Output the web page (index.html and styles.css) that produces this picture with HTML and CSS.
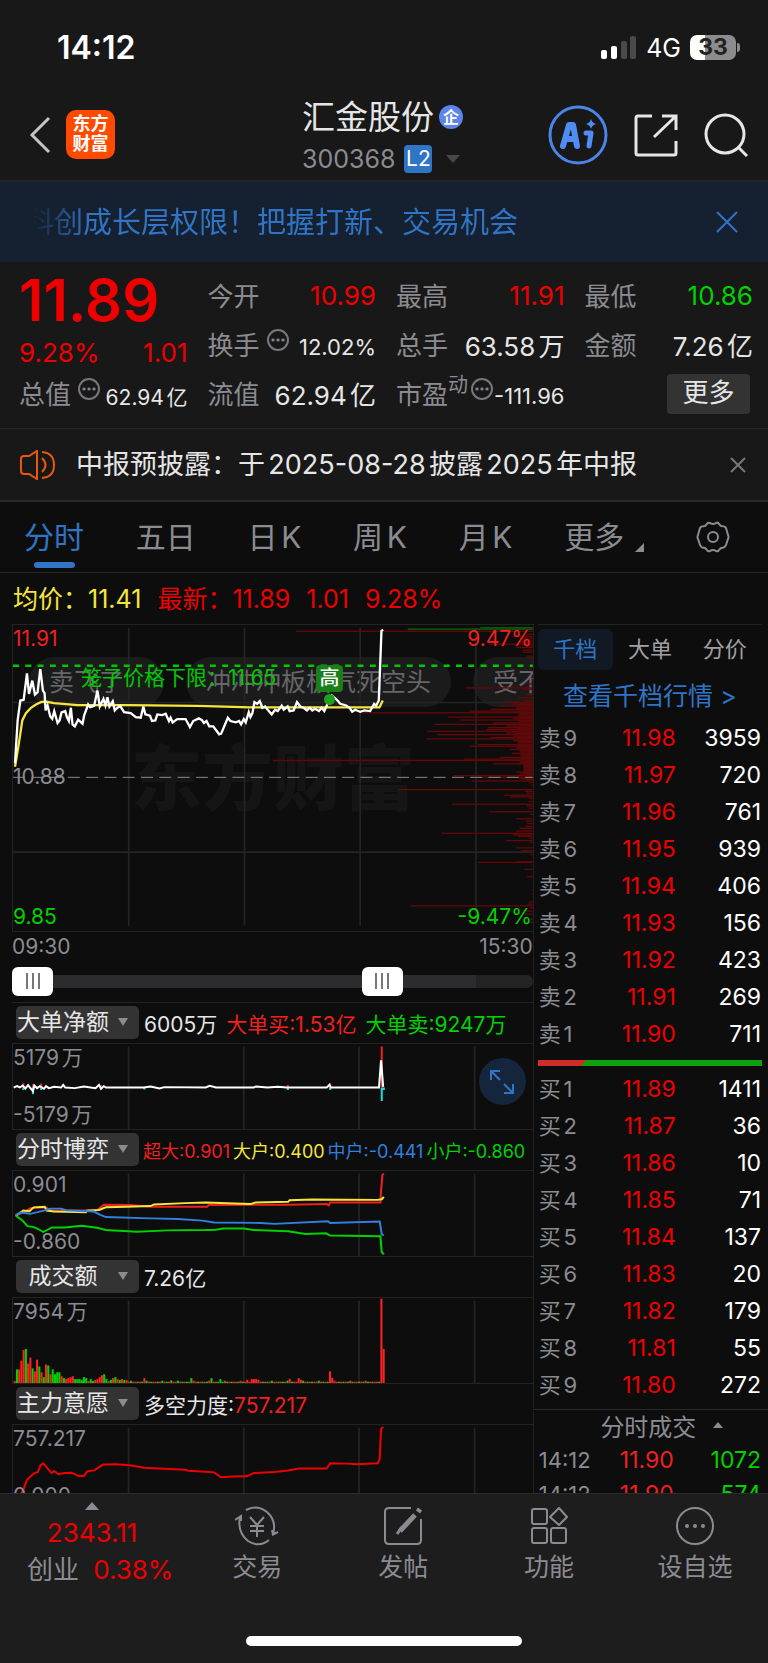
FILE: index.html
```html
<!DOCTYPE html>
<html lang="zh-CN">
<head>
<meta charset="UTF-8">
<meta name="viewport" content="width=device-width, initial-scale=1.0">
<title>汇金股份 300368</title>
<link rel="stylesheet" href="styles.css">
</head>
<body>
<div class="status-bar">
    <span class="time">14:12</span>
    <div class="status-right">
        <svg class="signal" width="36" height="23" viewBox="0 0 36 23">
            <rect x="0" y="14" width="6" height="9" rx="2" fill="#fff"/>
            <rect x="10" y="10" width="6" height="13" rx="2" fill="#fff"/>
            <rect x="20" y="5" width="6" height="18" rx="2" fill="#4a4a4a"/>
            <rect x="29" y="0" width="6" height="23" rx="2" fill="#4a4a4a"/>
        </svg>
        <span class="network">4G</span>
        <span class="battery">33</span>
    </div>
</div>

<header class="top-bar">
    <div class="top-side">
        <button class="icon-btn" aria-label="返回">
            <svg width="22" height="38" viewBox="0 0 22 38" fill="none" stroke="#c4c4c4" stroke-width="3"><path d="M20 2 L3 19 L20 36"/></svg>
        </button>
        <a class="logo" href="#">东方<br>财富</a>
    </div>
    <div class="stock-title">
        <h1>汇金股份<span class="corp-badge">企</span></h1>
        <div class="stock-code">300368<span class="level-badge">L2</span><span class="tri-down"></span></div>
    </div>
    <div class="top-side top-right">
        <button class="icon-btn" aria-label="AI">
            <svg width="60" height="60" viewBox="0 0 60 60" fill="none">
                <circle cx="30" cy="30" r="28" stroke="#4a86e8" stroke-width="3"/>
                <path d="M15 41 L21 20 H25 L29 41 M18 34 H27" stroke="#4f8df5" stroke-width="6" stroke-linecap="round" stroke-linejoin="round"/>
                <path d="M38 28 H43 L41 41" stroke="#4f8df5" stroke-width="5" stroke-linecap="round" stroke-linejoin="round"/>
                <path d="M43 14 Q44 18 48 19 Q44 20 43 24 Q42 20 38 19 Q42 18 43 14Z" fill="#4f8df5"/>
            </svg>
        </button>
        <button class="icon-btn" aria-label="分享">
            <svg width="44" height="44" viewBox="0 0 44 44" fill="none" stroke="#e6e6e6" stroke-width="3"><path d="M18 3 H4 Q2 3 2 5 V40 Q2 42 4 42 H40 Q42 42 42 40 V28"/><path d="M28 3 H42 V17 M42 3 L20 24"/></svg>
        </button>
        <button class="icon-btn" aria-label="搜索">
            <svg width="44" height="44" viewBox="0 0 44 44" fill="none" stroke="#e6e6e6" stroke-width="3"><circle cx="21" cy="21" r="19"/><path d="M34 34 L43 43"/></svg>
        </button>
    </div>
</header>

<div class="banner">
    <div class="banner-text"><span>科创成长层权限！把握打新、交易机会</span></div>
    <button class="icon-btn" aria-label="关闭">
        <svg width="22" height="22" viewBox="0 0 22 22" stroke="#3074c6" stroke-width="2"><path d="M1 1 L21 21 M21 1 L1 21"/></svg>
    </button>
</div>

<section class="quote">
    <div class="quote-col">
        <div class="last-price">11.89</div>
        <div class="change"><span>9.28%</span><span>1.01</span></div>
        <div class="item"><span class="label">总值</span><span class="dots"></span><span class="value small">62.94亿</span></div>
    </div>
    <div class="quote-col">
        <div class="item"><span class="label">今开</span><span class="value red">10.99</span></div>
        <div class="item"><span class="label">换手</span><span class="dots"></span><span class="value small">12.02%</span></div>
        <div class="item"><span class="label">流值</span><span class="value">62.94亿</span></div>
    </div>
    <div class="quote-col">
        <div class="item"><span class="label">最高</span><span class="value red">11.91</span></div>
        <div class="item"><span class="label">总手</span><span class="value">63.58万</span></div>
        <div class="item"><span class="label">市盈<sup>动</sup></span><span class="dots"></span><span class="value small">-111.96</span></div>
    </div>
    <div class="quote-col">
        <div class="item"><span class="label">最低</span><span class="value green">10.86</span></div>
        <div class="item"><span class="label">金额</span><span class="value">7.26亿</span></div>
        <div class="item"><button class="more-btn">更多</button></div>
    </div>
</section>

<div class="notice">
    <svg width="36" height="30" viewBox="0 0 36 30" fill="none" stroke="#e8590c" stroke-width="2"><path d="M9 6 H4 Q1 6 1 9 V21 Q1 24 4 24 H9 L17 29 V1 Z"/><path d="M22 8 Q29 15 22 22"/><path d="M22 2 Q34 3 34 15 Q34 27 22 28"/></svg>
    <p>中报预披露：于2025-08-28披露2025年中报</p>
    <button class="icon-btn" aria-label="关闭">
        <svg width="16" height="16" viewBox="0 0 16 16" stroke="#77777c" stroke-width="2"><path d="M1 1 L15 15 M15 1 L1 15"/></svg>
    </button>
</div>

<nav class="period-tabs">
    <button class="active">分时</button>
    <button>五日</button>
    <button>日K</button>
    <button>周K</button>
    <button>月K</button>
    <button class="has-more">更多</button>
    <button aria-label="设置">
        <svg width="34" height="32" viewBox="0 0 34 32" fill="none" stroke="#8b8b92" stroke-width="2"><path d="M11 3 Q12 1 14 2 Q17 4 20 2 Q22 1 23 3 L25 5 Q29 5 30 7 L32 14 Q33 16 32 18 L30 24 Q29 27 25 27 L23 29 Q22 31 20 30 Q17 28 14 30 Q12 31 11 29 L9 27 Q5 27 4 24 L2 18 Q1 16 2 14 L4 7 Q5 5 9 5 Z"/><circle cx="17" cy="16" r="5"/></svg>
    </button>
</nav>

<div class="legend">
    <span class="yellow">均价：11.41</span>
    <span>最新：11.89</span>
    <span>1.01</span>
    <span>9.28%</span>
</div>

<main class="content">
    <section class="charts">
        <div class="price-chart">
            <div class="watermark">东方财富</div>
            <div class="barrage">
                <span>卖飞了</span>
                <span>冲冲冲板板气死空头</span>
                <span>受不了</span>
            </div>
            <svg viewBox="0 0 1563 924" preserveAspectRatio="none">
                <path class="grid" d="M348 8V908M696 8V908M1044 8V908M1392 8V908M0 234H1563M0 686H1563"/>
                <g id="profile"></g>
                <path class="dash" d="M0 460H1563"/>
                <path class="limit" d="M0 123H1563"/>
                <polyline class="avg" transform="translate(-6 -12)" points="12,440 22,380 34,300 45,278 60,262 75,252 90,245 103,243 130,248 200,254 350,254 560,256 720,261 1108,261 1118,240"/>
                <polyline class="price" transform="translate(-6 -12)" points="12,430 20,300 28,240 38,238 48,158 54,220 64,180 72,222 80,215 88,145 96,210 101,218 104,270 110,255 118,288 124,295 130,272 140,308 146,300 152,276 163,272 168,290 174,302 180,262 185,312 192,318 202,298 215,310 220,285 232,252 238,260 250,256 260,210 267,258 278,235 284,255 290,230 296,258 306,242 312,270 320,262 328,256 340,275 360,278 375,290 390,292 398,258 404,282 418,286 424,302 434,300 440,282 455,284 465,280 475,302 480,292 486,306 500,296 525,296 538,320 548,302 565,294 575,300 580,308 588,302 596,318 608,318 626,342 632,340 652,292 660,302 676,306 686,302 692,312 700,296 706,306 715,275 720,290 726,278 732,245 740,250 748,242 756,262 764,258 774,270 784,282 794,268 802,272 814,256 820,268 832,258 838,272 850,270 860,245 870,258 880,262 890,270 898,262 906,270 914,265 926,272 934,262 942,272 952,250 965,225 980,238 990,250 1008,255 1018,262 1026,274 1035,268 1050,274 1062,270 1080,272 1092,250 1098,256 1106,240 1114,30 1119,26"/>
            </svg>
            <span class="limit-text">笼子价格下限：11.65</span>
            <span class="high-tag">高</span>
            <span class="axis top red">11.91</span>
            <span class="axis top right red">9.47%</span>
            <span class="axis middle">10.88</span>
            <span class="axis bottom green">9.85</span>
            <span class="axis bottom right green">-9.47%</span>
        </div>
        <div class="time-axis"><span>09:30</span><span>15:30</span></div>
        <div class="range">
            <input type="range" min="0" max="240" value="0" aria-label="开始时间">
            <input type="range" min="0" max="240" value="175" aria-label="结束时间">
        </div>

        <div class="indicator-head">
            <select aria-label="指标一"><option>大单净额</option></select>
            <span>6005万</span>
            <span class="red">大单买:1.53亿</span>
            <span class="green">大单卖:9247万</span>
        </div>
        <div class="indicator">
            <svg viewBox="0 0 1511 262" preserveAspectRatio="none">
                <path class="grid" d="M336 8V262M671 8V262M1006 8V262M1342 8V262"/>
                <path class="line red" d="M30 121V134M58 124V134M82 122V134M255 126V134M799 126V134M922 120V134M1072 8V134"/>
                <path class="line cyan" d="M30 134V142M58 134V155M82 134V142M382 134V140M799 134V142M922 134V142M1072 134V176M1078 134V142"/>
                <polyline class="line white" points="2,134 12,130 20,134 28,128 36,137 44,127 50,135 58,145 62,128 70,136 78,130 90,138 96,130 104,136 120,132 140,134 146,126 152,134 180,136 206,131 240,136 250,126 256,138 264,130 270,134 380,134 400,131 426,137 440,133 560,134 572,129 590,134 700,134 706,131 740,134 770,132 796,134 912,134 920,126 924,134 1064,134 1070,50 1076,132"/>
            </svg>
            <span class="axis top">5179万</span>
            <span class="axis bottom">-5179万</span>
            <button class="expand" aria-label="全屏">
                <svg width="24" height="24" viewBox="0 0 24 24" fill="none" stroke="#3074c6" stroke-width="2"><path d="M1 10V1H10M1 1L10 10M23 14V23H14M23 23L14 14"/></svg>
            </button>
        </div>

        <div class="indicator-head compact">
            <select aria-label="指标二"><option>分时博弈</option></select>
            <span class="red">超大:0.901</span>
            <span class="yellow">大户:0.400</span>
            <span class="blue">中户:-0.441</span>
            <span class="green">小户:-0.860</span>
        </div>
        <div class="indicator">
            <svg viewBox="0 0 1511 262" preserveAspectRatio="none">
                <path class="grid" d="M336 8V262M671 8V262M1006 8V262M1342 8V262"/>
                <polyline class="line red" points="8,137 35,125 50,115 95,112 110,122 205,122 245,120 264,104 340,105 400,110 564,110 570,105 800,104 912,102 918,106 922,97 1068,97 1070,60 1074,12 1078,8"/>
                <polyline class="line yellow" points="8,138 30,122 48,124 60,112 92,110 98,122 118,125 212,127 215,122 250,120 270,112 330,110 400,108 410,103 500,99 560,97 690,102 705,97 800,95 804,90 870,88 1060,89 1072,87 1078,80"/>
                <polyline class="line blue" points="8,135 25,128 50,132 90,122 108,116 140,116 155,121 235,125 254,135 270,142 400,146 480,148 550,153 585,159 720,160 760,163 915,155 922,160 1066,156 1072,195 1078,199"/>
                <polyline class="line green" points="8,138 25,150 42,170 60,173 72,178 88,188 114,174 150,174 200,169 244,175 270,182 360,187 450,183 560,182 590,181 610,177 670,177 700,182 800,186 850,194 910,192 922,199 1068,201 1072,250 1078,257"/>
            </svg>
            <span class="axis top">0.901</span>
            <span class="axis bottom">-0.860</span>
        </div>

        <div class="indicator-head">
            <select aria-label="指标三"><option>成交额</option></select>
            <span>7.26亿</span>
        </div>
        <div class="indicator">
            <svg viewBox="0 0 1511 262" preserveAspectRatio="none">
                <path class="grid" d="M336 8V262M671 8V262M1006 8V262M1342 8V262"/>
                <g id="amount"></g>
            </svg>
            <span class="axis top">7954万</span>
        </div>

        <div class="indicator-head">
            <select aria-label="指标四"><option>主力意愿</option></select>
            <span>多空力度:<b class="red">757.217</b></span>
        </div>
        <div class="indicator">
            <svg viewBox="0 0 1511 262" preserveAspectRatio="none">
                <path class="grid" d="M336 8V262M671 8V262M1006 8V262M1342 8V262"/>
                <polyline class="line deep-red" points="8,250 22,215 30,200 40,170 60,150 72,145 80,124 88,118 96,128 112,148 120,142 132,152 150,148 170,147 190,157 206,157 216,143 236,140 262,122 300,121 340,124 380,132 500,138 510,141 560,144 585,146 604,161 640,159 680,158 700,148 760,145 800,140 830,134 912,134 922,118 970,119 1000,121 1060,118 1066,105 1070,12 1076,6"/>
            </svg>
            <span class="axis top">757.217</span>
            <span class="axis bottom">0.000</span>
        </div>
    </section>

    <aside class="order-book">
        <div class="book-tabs">
            <button class="active">千档</button>
            <button>大单</button>
            <button>分价</button>
        </div>
        <a class="book-link" href="#">查看千档行情 &gt;</a>
        <table>
            <tr><th>卖9</th><td>11.98</td><td>3959</td></tr>
            <tr><th>卖8</th><td>11.97</td><td>720</td></tr>
            <tr><th>卖7</th><td>11.96</td><td>761</td></tr>
            <tr><th>卖6</th><td>11.95</td><td>939</td></tr>
            <tr><th>卖5</th><td>11.94</td><td>406</td></tr>
            <tr><th>卖4</th><td>11.93</td><td>156</td></tr>
            <tr><th>卖3</th><td>11.92</td><td>423</td></tr>
            <tr><th>卖2</th><td>11.91</td><td>269</td></tr>
            <tr><th>卖1</th><td>11.90</td><td>711</td></tr>
        </table>
        <div class="ratio"></div>
        <table>
            <tr><th>买1</th><td>11.89</td><td>1411</td></tr>
            <tr><th>买2</th><td>11.87</td><td>36</td></tr>
            <tr><th>买3</th><td>11.86</td><td>10</td></tr>
            <tr><th>买4</th><td>11.85</td><td>71</td></tr>
            <tr><th>买5</th><td>11.84</td><td>137</td></tr>
            <tr><th>买6</th><td>11.83</td><td>20</td></tr>
            <tr><th>买7</th><td>11.82</td><td>179</td></tr>
            <tr><th>买8</th><td>11.81</td><td>55</td></tr>
            <tr><th>买9</th><td>11.80</td><td>272</td></tr>
        </table>
        <h2 class="deals-title">分时成交<span class="tri-up"></span></h2>
        <table class="deals">
            <tr><th>14:12</th><td>11.90</td><td>1072</td></tr>
            <tr><th>14:12</th><td>11.90</td><td>574</td></tr>
        </table>
    </aside>
</main>

<footer class="bottom-bar">
    <nav class="bottom-nav">
        <a class="index" href="#">
            <span class="tri-up"></span>
            <span class="index-value">2343.11</span>
            <span class="index-name">创业<b>0.38%</b></span>
        </a>
        <a href="#">
            <svg width="44" height="40" viewBox="0 0 44 40" fill="none" stroke="#8b8b92" stroke-width="2"><path d="M11 4 Q22 -2 32 6 Q42 15 38 28 M38 29 L37 24 M37 29 L43 26"/><path d="M34 34 Q24 42 13 35 Q2 26 5 11 M0 14 L6 10 L6 15"/><path d="M15 11 L22 19 L29 11 M22 19 V31 M15 20 H29 M15 25 H29"/></svg>
            <span>交易</span>
        </a>
        <a href="#">
            <svg width="40" height="40" viewBox="0 0 40 40" fill="none" stroke="#8b8b92" stroke-width="2"><path d="M28 2 H6 Q2 2 2 6 V34 Q2 38 6 38 H34 Q38 38 38 34 V13"/><path d="M32 9 L17 25 M35 6 L37 3" stroke-width="5"/><path d="M19 21 L14 28" stroke-width="3"/></svg>
            <span>发帖</span>
        </a>
        <a href="#">
            <svg width="40" height="40" viewBox="0 0 40 40" fill="none" stroke="#8b8b92" stroke-width="2"><rect x="3" y="3" width="15" height="15" rx="2"/><rect x="3" y="22" width="15" height="15" rx="2"/><rect x="22" y="22" width="15" height="15" rx="2"/><path d="M30 2 L38 11 L30 19 L21 11 Z" stroke-linejoin="round"/></svg>
            <span>功能</span>
        </a>
        <a href="#">
            <svg width="40" height="40" viewBox="0 0 40 40" fill="none" stroke="#8b8b92" stroke-width="2"><circle cx="20" cy="20" r="18"/><g fill="#8b8b92" stroke="none"><circle cx="12" cy="20" r="2"/><circle cx="20" cy="20" r="2"/><circle cx="28" cy="20" r="2"/></g></svg>
            <span>设自选</span>
        </a>
    </nav>
    <div class="home-indicator"></div>
</footer>

<script>
    const NS = "http://www.w3.org/2000/svg";

    function bar(parent, x, y, width, height, color) {
        const rect = document.createElementNS(NS, "rect");
        rect.setAttribute("x", x);
        rect.setAttribute("y", y);
        rect.setAttribute("width", width);
        rect.setAttribute("height", height);
        rect.setAttribute("fill", color);
        parent.appendChild(rect);
    }

    // Volume by price: [y, length]
    const profile = [
        [19, 711], [28, 20], [34, 60], [40, 40], [46, 30], [52, 45], [58, 130], [64, 20], [68, 50], [76, 30], [82, 30],
        [94, 18], [100, 8], [112, 6], [138, 6], [158, 5], [178, 20], [190, 203], [194, 30], [210, 20], [220, 45],
        [228, 25], [234, 80], [238, 60], [244, 95], [250, 50], [255, 125], [260, 190], [265, 509], [270, 40],
        [278, 255], [282, 60], [287, 220], [291, 40], [296, 120], [300, 295], [305, 80], [310, 135], [316, 140],
        [321, 317], [326, 80], [331, 288], [336, 60], [340, 128], [344, 320], [349, 60], [354, 40], [361, 165],
        [366, 192], [370, 50], [376, 70], [381, 40], [388, 62], [394, 30], [400, 100], [405, 207], [409, 781],
        [414, 40], [419, 120], [424, 25], [430, 20], [436, 15], [444, 50], [450, 40], [455, 240], [460, 150],
        [464, 40], [471, 183], [476, 10], [484, 5], [497, 405], [502, 24], [508, 18], [514, 86], [519, 68],
        [524, 10], [533, 12], [541, 244], [546, 18], [553, 12], [564, 129], [572, 8], [585, 50], [592, 20],
        [600, 18], [608, 22], [614, 40], [622, 50], [629, 273], [634, 60], [638, 45], [644, 10], [651, 80],
        [656, 8], [673, 50], [682, 35], [693, 6], [715, 50], [717, 164], [738, 25], [760, 17], [800, 4], [813, 3],
        [836, 12], [843, 16], [848, 367], [854, 10], [864, 20], [873, 25], [888, 10], [898, 15]
    ];
    const profileGroup = document.getElementById("profile");
    bar(profileGroup, 1563 - 376, 10, 376, 5, "#0a560a");
    bar(profileGroup, 1563 - 158, 6, 158, 5, "#0a560a");
    profile.forEach(([y, length]) => bar(profileGroup, 1563 - length, y - 2, length, 4, "#650808"));
    for (let y = 238; y < 470; y += 4) {
        const length = y < 320 ? 38 + (y * 7) % 12 : 52 - (y - 320) / 4 + (y * 7) % 9;
        bar(profileGroup, 1563 - length, y, length, 4, "#5c0a0a");
    }

    // Turnover per minute: height and colour
    const amount = ("6r 42g 42r 69r 102r 105g 60r 78r 45g 36r 72r 51g 33r 18g 57r 54g 27r 42g 27g 33g 33g 21r 15g 12r 15r " +
        "18r 21r 12g 12g 12g 9g 18g 15g 6r 12g 6g 9r 12r 18r 24r 27g 12g 6r 10g 15r 18g 12r 9g 12r 9g 9r").split(" ");
    for (let i = amount.length; i < 165; i++) {
        amount.push((i % 7 === 3 ? 7 : 4) + ((i * 5) % 9 < 5 ? "r" : "g"));
    }
    Object.assign(amount, {58: "15r", 70: "8g", 79: "15g", 88: "15g", 92: "12g", 104: "10r", 106: "12r", 107: "12r",
        108: "12r", 109: "10r", 123: "13r", 127: "15r", 128: "10r", 141: "36r", 142: "16r", 164: "260r", 165: "105r"});
    amount.forEach((item, i) => {
        const height = parseInt(item);
        bar(document.getElementById("amount"), 2 + i * 6.5, 262 - height, 6, height, item.endsWith("r") ? "#ff2222" : "#00d200");
    });
</script>
</body>
</html>
```

FILE: styles.css
```css
* {
    box-sizing: border-box;
}

body {
    display: flex;
    flex-direction: column;
    height: 100vh;
    margin: 0;
    overflow: hidden;
    background-color: #181818;
    color: #e6e6e6;
    font-family: Inter, "Noto Sans CJK SC", sans-serif;
    font-size: 26px;
    text-autospace: normal;
}

button, select {
    padding: 0;
    border: none;
    background: none;
    color: inherit;
    font: inherit;
    cursor: pointer;
}

a {
    color: inherit;
    text-decoration: none;
}

h1, h2, p {
    margin: 0;
    font-weight: normal;
}

svg {
    display: block;
}

.red { color: #f02020; }
.green { color: #00d200; }
.yellow { color: #f5e63c; }
.blue { color: #3080e0; }

.tri-down, .tri-up {
    border-left: 7px solid transparent;
    border-right: 7px solid transparent;
}

.tri-down {
    border-top: 8px solid #48484a;
}

.tri-up {
    border-bottom: 8px solid #8b8b92;
}

/* status bar */
.status-bar {
    display: flex;
    flex-shrink: 0;
    align-items: center;
    justify-content: space-between;
    height: 95px;
    padding: 0 32px 0 57px;
    color: #fff;
}

.time {
    font-size: 32px;
    font-weight: 600;
}

.status-right {
    display: flex;
    align-items: center;
    gap: 9px;
}

.network {
    font-size: 25px;
}

.battery {
    position: relative;
    width: 46px;
    height: 25px;
    border-radius: 7px;
    background: linear-gradient(to right, #fff 33%, #8c8c8c 33%);
    color: #222;
    font-size: 23px;
    font-weight: 700;
    line-height: 25px;
    text-align: center;
}

.battery::after {
    content: "";
    position: absolute;
    top: 8px;
    right: -4px;
    width: 3px;
    height: 9px;
    border-radius: 0 3px 3px 0;
    background-color: #8c8c8c;
}

/* header */
.top-bar {
    display: flex;
    flex-shrink: 0;
    align-items: center;
    justify-content: space-between;
    height: 87px;
    padding: 0 20px 6px 29px;
    border-bottom: 2px solid #252525;
}

.top-side {
    display: flex;
    flex: 1;
    align-items: center;
    gap: 15px;
}

.top-right {
    justify-content: flex-end;
    gap: 26px;
}

.logo {
    width: 49px;
    height: 49px;
    padding-top: 4px;
    border-radius: 10px;
    background-color: #ff4a00;
    color: #fff;
    font-size: 18px;
    font-weight: 700;
    line-height: 20px;
    text-align: center;
}

.stock-title {
    padding: 6px 12px 0 0;
}

.stock-title h1 {
    display: flex;
    align-items: center;
    gap: 5px;
    font-size: 33px;
    line-height: 42px;
}

.corp-badge {
    width: 24px;
    height: 24px;
    border-radius: 50%;
    background-color: #5b85ea;
    color: #fff;
    font-size: 16px;
    font-weight: 700;
    line-height: 24px;
    text-align: center;
}

.stock-code {
    display: flex;
    align-items: center;
    color: #8b8b92;
    font-size: 25px;
    line-height: 42px;
}

.level-badge {
    width: 28px;
    height: 28px;
    margin: 0 14px 0 9px;
    border-radius: 4px;
    background-color: #3074c6;
    color: #fff;
    font-size: 21px;
    line-height: 28px;
    text-align: center;
}

/* banner */
.banner {
    display: flex;
    flex-shrink: 0;
    align-items: center;
    justify-content: space-between;
    height: 80px;
    padding: 0 30px 0 32px;
    background-color: #152130;
    color: #3074c6;
    font-size: 29px;
}

.banner-text {
    display: flex;
    justify-content: flex-end;
    width: 486px;
    padding-bottom: 4px;
    overflow: hidden;
    white-space: nowrap;
    mask-image: linear-gradient(to right, transparent, #000 56px);
}

/* quote */
.quote {
    display: grid;
    grid-template-columns: repeat(4, 1fr);
    flex-shrink: 0;
    gap: 20px;
    height: 167px;
    padding: 9px 15px 0 19px;
    border-bottom: 1px solid #282828;
}

.quote-col {
    display: flex;
    flex-direction: column;
}

.item {
    display: flex;
    align-items: center;
    height: 49px;
}

.label {
    position: relative;
    padding-bottom: 3px;
    color: #8b8b92;
}

.label sup {
    position: absolute;
    top: -1px;
    left: 100%;
    font-size: 20px;
    line-height: 24px;
}

.label:has(sup) {
    margin-right: 16px;
}

.value {
    margin-left: auto;
}

.value.red {
    color: #ee0000;
}

.value.small {
    padding-top: 4px;
    font-size: 22px;
}

.quote-col:first-child .small {
    font-size: 21px;
}

.dots {
    width: 22px;
    height: 22px;
    margin: 0 0 10px 7px;
    padding: 0 1px;
    border: 2px solid #77777c;
    border-radius: 50%;
    background: radial-gradient(circle, #8b8b92 1px, transparent 2px) center / 5px 18px;
    background-clip: content-box;
}

.last-price {
    height: 60px;
    color: #ee0000;
    font-size: 58px;
    font-weight: 600;
    line-height: 58px;
}

.change {
    display: flex;
    justify-content: space-between;
    height: 38px;
    color: #ee0000;
    line-height: 44px;
}

.more-btn {
    width: 83px;
    height: 40px;
    margin: 0 3px 0 auto;
    padding-bottom: 2px;
    border-radius: 4px;
    background-color: #333;
    line-height: 38px;
}

/* notice */
.notice {
    display: flex;
    flex-shrink: 0;
    align-items: center;
    height: 73px;
    padding: 0 22px 0 20px;
    border-bottom: 2px solid #282828;
}

.notice p {
    flex: 1;
    margin-left: 20px;
    padding-bottom: 4px;
    font-size: 27px;
}

/* tabs */
.period-tabs {
    display: flex;
    flex-shrink: 0;
    align-items: center;
    justify-content: space-between;
    height: 71px;
    padding: 0 38px 0 24px;
    border-bottom: 1px solid #282828;
    background-color: #0d0d0d;
    color: #8b8b92;
    font-size: 30px;
}

.period-tabs button {
    position: relative;
    line-height: 70px;
}

.period-tabs .active {
    color: #3074c6;
}

.period-tabs .active::after {
    content: "";
    position: absolute;
    bottom: 4px;
    left: 10px;
    width: 41px;
    height: 6px;
    border-radius: 3px;
    background-color: #3074c6;
}

.period-tabs .has-more {
    padding-right: 20px;
}

.has-more::after {
    content: "";
    position: absolute;
    right: 0;
    bottom: 20px;
    border-bottom: 9px solid #8b8b92;
    border-left: 9px solid transparent;
}

.legend {
    display: flex;
    flex-shrink: 0;
    gap: 16px;
    height: 51px;
    padding-left: 13px;
    background-color: #0d0d0d;
    color: #ee0000;
    font-size: 25px;
    line-height: 52px;
}

/* charts */
.content {
    display: flex;
    flex: 1;
    min-height: 0;
    overflow: hidden;
    background-color: #0d0d0d;
}

.charts {
    flex: 1;
    min-width: 0;
    padding-left: 12px;
    border-right: 1px solid #222;
}

.charts svg {
    fill: none;
}

.price-chart, .indicator {
    position: relative;
    overflow: hidden;
    border: solid #232323;
    border-width: 1px 0 1px 1px;
}

.price-chart {
    height: 308px;
}

.price-chart > svg, .indicator > svg {
    position: relative;
    width: 100%;
    height: 100%;
}

.grid {
    stroke: #242424;
    stroke-width: 5;
}

.dash {
    stroke: #8b8b92;
    stroke-width: 3;
    stroke-dasharray: 36 19;
}

.limit {
    stroke: #00c800;
    stroke-width: 7;
    stroke-dasharray: 18 19;
}

.avg, .price {
    stroke: #f5e63c;
    stroke-width: 7;
}

.price {
    stroke: #fff;
}

.line {
    stroke: currentColor;
    stroke-width: 6;
}

.white { color: #fff; }
.cyan { color: #20d8d8; }
.deep-red { color: #ee0000; }

.watermark {
    position: absolute;
    top: 108px;
    left: 118px;
    color: #151515;
    font-size: 71px;
    font-weight: 900;
    line-height: 90px;
}

.barrage {
    position: absolute;
    top: 32px;
    left: 16px;
    display: flex;
    gap: 22px;
    color: #66666a;
    font-size: 25px;
    line-height: 50px;
    white-space: nowrap;
}

.barrage span {
    padding: 0 20px;
    border-radius: 25px;
    background-color: rgba(50, 50, 50, 0.4);
}

.barrage span:first-child {
    padding-right: 40px;
}

.limit-text {
    position: absolute;
    top: 38px;
    left: 68px;
    color: #00c800;
    font-size: 21px;
    line-height: 30px;
}

.high-tag {
    position: absolute;
    top: 40px;
    left: 303px;
    width: 27px;
    border-radius: 4px;
    background-color: #1a7f1a;
    color: #fff;
    font-size: 20px;
    font-weight: 500;
    line-height: 27px;
    text-align: center;
}

.high-tag::after {
    content: "";
    position: absolute;
    top: 29px;
    left: 8px;
    width: 11px;
    height: 11px;
    border-radius: 50%;
    background-color: #1fa01f;
}

.axis {
    position: absolute;
    left: 0;
    color: #8b8b92;
    font-size: 21px;
    line-height: 26px;
}

.axis.red { color: #f02020; }
.axis.green { color: #00d200; }
.axis.top { top: 1px; }
.axis.bottom { bottom: 1px; }
.axis.middle { top: 139px; }

.axis.right {
    right: 1px;
    left: auto;
}

.time-axis {
    display: flex;
    justify-content: space-between;
    color: #8b8b92;
    font-size: 21px;
    line-height: 30px;
}

.range {
    position: relative;
    height: 41px;
    border-bottom: 1px solid #222;
}

.range::before {
    content: "";
    position: absolute;
    top: 13px;
    width: 100%;
    height: 13px;
    border-radius: 7px;
    background: linear-gradient(to right, #2c2c2e 89%, #232323 89%);
}

.range input {
    position: absolute;
    top: 4px;
    left: 0;
    width: 100%;
    height: 30px;
    margin: 0;
    background: none;
    appearance: none;
    pointer-events: none;
}

.range input::-webkit-slider-thumb {
    width: 41px;
    height: 29px;
    border-radius: 6px;
    background: repeating-linear-gradient(to right, #777 0 2px, #fff 2px 6px) center / 14px 16px no-repeat #fff;
    appearance: none;
    pointer-events: auto;
}

.indicator-head {
    position: relative;
    display: flex;
    align-items: center;
    gap: 9px;
    height: 40px;
    padding: 0 0 1px 4px;
    font-size: 21px;
    text-autospace: no-autospace;
    white-space: nowrap;
}

.indicator-head.compact {
    gap: 3px;
    font-size: 18px;
}

.indicator-head select {
    width: 123px;
    height: 33px;
    margin-right: -4px;
    padding: 0 29px 0 0;
    border-radius: 5px;
    background-color: #333;
    font-size: 23px;
    line-height: 33px;
    text-align-last: center;
    appearance: none;
}

.indicator-head.compact select {
    margin-right: 1px;
}

.indicator-head b {
    font-weight: normal;
}

/* arrow of the drop-down */
.indicator-head::after {
    content: "";
    position: absolute;
    top: 15px;
    left: 106px;
    border-top: 8px solid #8b8b92;
    border-right: 5px solid transparent;
    border-left: 5px solid transparent;
    pointer-events: none;
}

.indicator {
    height: 87px;
}

.expand {
    position: absolute;
    top: 14px;
    right: 7px;
    display: flex;
    align-items: center;
    justify-content: center;
    width: 47px;
    height: 47px;
    border-radius: 50%;
    background-color: #15263c;
}

/* order book */
.order-book {
    flex: 0 0 30.5%;
    padding: 0 6px 0 4px;
}

.book-tabs {
    display: flex;
    padding-top: 4px;
    border-top: 1px solid #232323;
    color: #a0a0a4;
    font-size: 22px;
}

.book-tabs button {
    flex: 1;
    height: 41px;
    padding-bottom: 5px;
    border-radius: 6px;
}

.book-tabs .active {
    background-color: #111a24;
    color: #3074c6;
}

.book-link {
    display: block;
    height: 50px;
    color: #3074c6;
    font-size: 25px;
    line-height: 53px;
    text-align: center;
}

.order-book table {
    width: 100%;
    border-collapse: collapse;
    font-size: 23px;
    line-height: 27px;
}

.order-book th, .order-book td {
    height: 37px;
    padding: 0;
    text-align: right;
    white-space: nowrap;
}

.order-book th {
    width: 30%;
    padding-left: 1px;
    color: #8b8b92;
    font-size: 22px;
    font-weight: normal;
    text-align: left;
}

.order-book td {
    width: 38%;
    padding-right: 1px;
    color: #fff;
}

.order-book td:nth-child(2) {
    width: 32%;
    color: #ee0000;
}

.ratio {
    height: 6px;
    margin: 7px 0 5px;
    background: linear-gradient(135deg, #d02c2c 21%, #0fa00f 21%);
}

.deals-title {
    display: flex;
    align-items: center;
    justify-content: center;
    gap: 17px;
    height: 34px;
    margin: 5px -6px 0 -4px;
    padding: 0 0 3px 22px;
    border-top: 1px solid #2a2a2a;
    color: #8b8b92;
    font-size: 24px;
}

.deals-title .tri-up {
    border-width: 0 5px 6px;
}

.order-book .deals th, .order-book .deals td {
    height: 34px;
}

.order-book .deals td:nth-child(2) {
    padding-right: 3px;
    color: #f02020;
}

.order-book .deals td:nth-child(3) {
    color: #00d200;
}

/* bottom bar */
.bottom-bar {
    flex-shrink: 0;
    height: 170px;
    border-top: 1px solid #2c2c2c;
    background-color: #1d1d1d;
    color: #8b8b92;
}

.bottom-nav {
    display: flex;
    height: 142px;
}

.bottom-nav a {
    display: flex;
    flex: 1;
    flex-direction: column;
    align-items: center;
    gap: 5px;
    padding-top: 12px;
    font-size: 25px;
    line-height: 32px;
}

.bottom-nav .index {
    flex: 0 0 24%;
    padding: 8px 0 0;
    font-size: 26px;
}

.index-value {
    padding-top: 2px;
}

.index-name {
    padding-left: 16px;
}

.index-value, .index-name b {
    color: #ee0000;
    font-weight: normal;
}

.index-name b {
    margin-left: 11px;
}

.home-indicator {
    width: 36%;
    height: 10px;
    margin: 0 auto;
    border-radius: 5px;
    background-color: #fff;
}
```
